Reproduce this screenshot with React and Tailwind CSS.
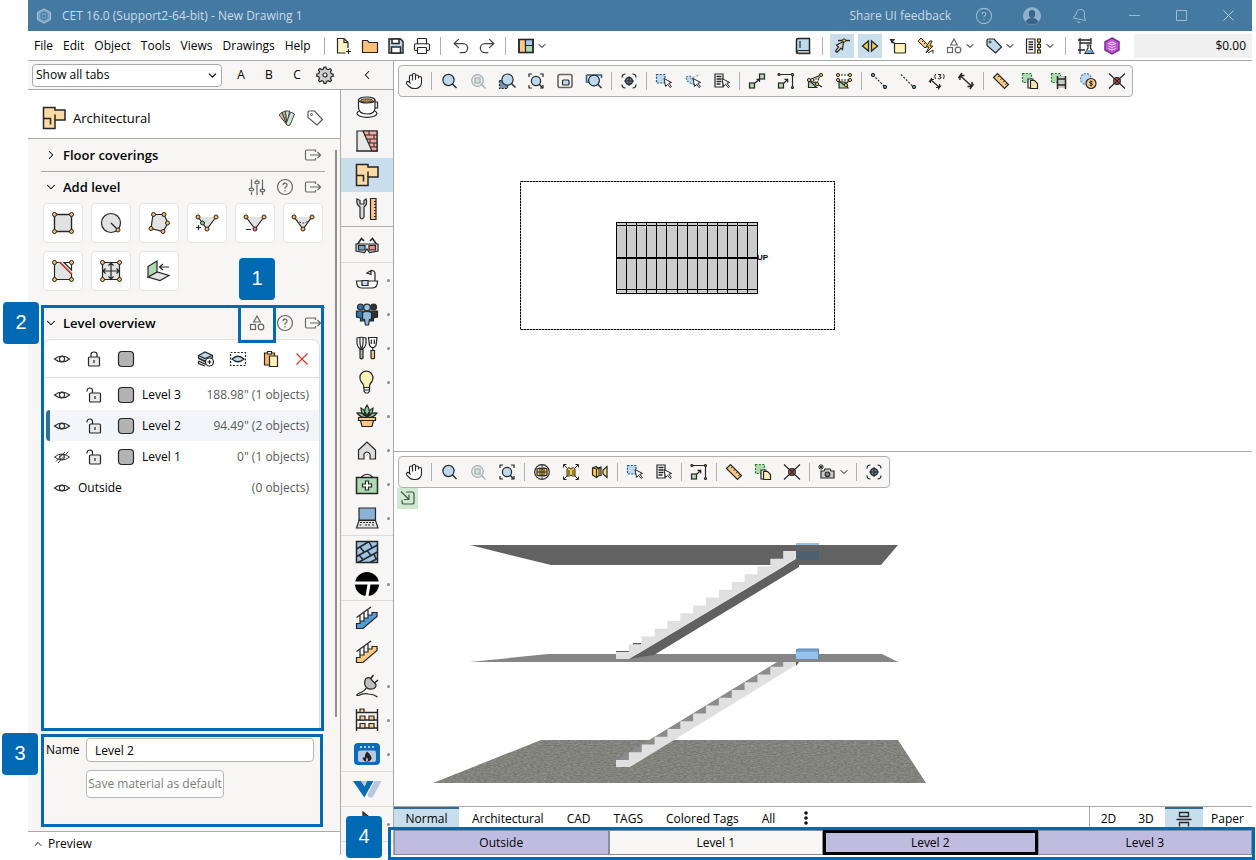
import React, { useState } from "react";
import { Hand, Undo2, Redo2, Printer, Bell, ChevronDown, ChevronRight, ChevronLeft, ChevronUp } from "lucide-react";

const INK = "#262626";
const BLUE = "#bdd9ee";
const GREEN = "#aed9b1";
const GOLD = "#f7cf45";
const ORANGE = "#fbc887";

const Glyph = ({ size = 20, children, className = "" }) => (
  <svg
    width={size}
    height={size}
    viewBox={`0 0 ${size} ${size}`}
    fill="none"
    stroke={INK}
    strokeWidth="1.2"
    className={`shrink-0 ${className}`}
    aria-hidden="true"
  >
    {children}
  </svg>
);

const Cursor = ({ x = 10, y = 7.5 }) => (
  <path d={`M${x} ${y}l1.6 8 2-2.2 2.6 3.2 1.2-1-2.6-3.2 2.8-.8z`} fill="#fff" strokeWidth="1" />
);

const Corners = () => <path d="M3 6V3h3M14 3h3v3M17 14v3h-3M6 17H3v-3" />;

const Node = ({ x, y, r = 2, fill = "#fbb95f" }) => <circle cx={x} cy={y} r={r} fill={fill} strokeWidth="1" />;

const Pin = ({ x, y }) => <circle cx={x} cy={y} r="1.6" fill={GOLD} strokeWidth="1" />;

const glyphs = {
  search: (
    <g>
      <circle cx="9.5" cy="9" r="5.6" fill={BLUE} />
      <path d="M13.5 13l4 4" strokeWidth="1.4" />
    </g>
  ),
  searchOff: (
    <g stroke="#a9adb1">
      <circle cx="9.5" cy="9.5" r="5.8" fill="#e8ebee" />
      <rect x="7" y="7" width="5" height="5" fill="#d2e3d1" />
      <path d="M13.5 13.5l4 4" />
    </g>
  ),
  searchArea: (
    <g>
      <rect x="2.5" y="9.5" width="8" height="8" fill="#6f93b0" strokeDasharray="2 1.3" />
      <circle cx="10.5" cy="8.6" r="5.6" fill={BLUE} />
      <path d="M14.5 12.6l4 4" strokeWidth="1.4" />
    </g>
  ),
  searchFit: (
    <g>
      <Corners />
      <circle cx="10" cy="10" r="4.6" fill={BLUE} />
      <path d="M13.4 13.4l3.5 3.5" strokeWidth="1.4" />
    </g>
  ),
  pip: (
    <g>
      <rect x="3" y="3.5" width="14" height="13" rx="2" stroke="#666" strokeWidth="1.6" />
      <rect x="7.5" y="9" width="6.5" height="5" rx="1" fill={BLUE} />
    </g>
  ),
  searchWindow: (
    <g>
      <path d="M2.5 4h15v3M2.5 4v7h3" strokeWidth="1.6" stroke="#2c5d84" />
      <circle cx="10" cy="9.5" r="5.4" fill={BLUE} />
      <path d="M14 13.6l3.5 3.5" strokeWidth="1.4" />
    </g>
  ),
  target: (
    <g>
      <path d="M3 6.5Q3 3 6.5 3M13.5 3Q17 3 17 6.5M17 13.5Q17 17 13.5 17M6.5 17Q3 17 3 13.5" />
      <circle cx="10" cy="10" r="3.4" fill="#6d8ba3" />
      <path d="M10 5v10M5 10h10" strokeWidth="1" />
    </g>
  ),
  selectBox: (
    <g>
      <rect x="2.5" y="3.5" width="8.5" height="8.5" fill={BLUE} strokeDasharray="2 1.3" stroke="#24577f" />
      <Cursor />
    </g>
  ),
  selectLasso: (
    <g>
      <path d="M3 6l4-1 4 4 2 5-4-1-5-3z" stroke="#4d7ea5" strokeDasharray="2 1.3" fill={BLUE} />
      <path d="M7 8l10-4.5" stroke="#7ca3c2" strokeDasharray="2 1.5" />
      <Cursor />
    </g>
  ),
  selectList: (
    <g>
      <path d="M3 3h8v13H3z" fill="#fff" />
      <path d="M4.5 5.5h5M4.5 8h5M4.5 10.5h5M4.5 13h4" strokeWidth="1.4" />
      <Cursor />
    </g>
  ),
  stretchA: (
    <g>
      <rect x="2.5" y="12" width="5" height="5" fill={GREEN} />
      <rect x="12.5" y="3" width="5" height="5" fill={GREEN} />
      <path d="M8 12l4-3.5M9.5 8.3h3V11" />
    </g>
  ),
  stretchB: (
    <g>
      <rect x="2.5" y="12" width="5" height="5" fill={GREEN} />
      <path d="M3 3.5h13.5v13M8 12l3.5-3.5M8.5 8.3h3.2v3.2" />
      <circle cx="3" cy="3.5" r="1" fill={GOLD} />
      <circle cx="16.5" cy="3.5" r="1" fill={GOLD} />
      <circle cx="16.5" cy="16.5" r="1" fill={GOLD} />
    </g>
  ),
  snapA: (
    <g>
      <path d="M3.5 9.5v7h8l-4-4z" fill={GREEN} />
      <path d="M4 9l12-5M4 9l8 4 5 3" />
      <path d="M8 9l6-2-2 5z" fill="#fff" strokeDasharray="1.5 1" />
      <Pin x={4} y={9} />
      <Pin x={16} y={4} />
      <Pin x={12} y={13} />
    </g>
  ),
  snapB: (
    <g>
      <path d="M5 11h6l3 6H5z" fill={GREEN} />
      <path d="M4 4h12M4 9h12" strokeDasharray="2 1" />
      <path d="M4 9l6 5 6-5" />
      <Pin x={4} y={4} />
      <Pin x={16} y={4} />
      <Pin x={4} y={9} />
      <Pin x={16} y={9} />
      <Pin x={12} y={14} />
    </g>
  ),
  lineNodes: (
    <g>
      <path d="M4 4l12 12" strokeDasharray="2 1.5" />
      <Node x={4} y={4} r={1.7} fill="#5b93bf" />
      <Node x={16} y={16} r={1.7} fill="#5b93bf" />
    </g>
  ),
  lineDots: (
    <g>
      <path d="M3 3.5l12 12" strokeDasharray="2 1.5" />
      <Node x={16} y={16} r={1.7} fill="#5b93bf" />
    </g>
  ),
  dimThree: (
    <g>
      <path d="M3.5 8.5l9 8M3.5 8.5V12M3.5 8.5H7M12.5 16.5V13M12.5 16.5H9M2 11l3-4M11 18.5l3-4" />
      <path d="M8.5 3Q7 5.500 8.500 8M16.500 3q1.500 2.500 0 5M11 3.500h3l-1.500 2q2 .2 1.500 1.500-1 1.500-3 .5" strokeWidth="1" />
    </g>
  ),
  dimension: (
    <path
      d="M4 4.500l12 11M4 4.500V9M4 4.500h4.500M16 15.500V11M16 15.500h-4.500M2.500 7l3.500-5M14 18l3.500-5"
      strokeWidth="1.4"
    />
  ),
  ruler: (
    <g>
      <path d="M2.5 6.5l4-4 11 11-4 4z" fill={ORANGE} />
      <path d="M8.5 4.8L7 6.3M11 7.3L9.5 8.8M13.5 9.8L12 11.3M16 12.3l-1.5 1.5" strokeWidth="1" />
    </g>
  ),
  sheets: (
    <g>
      <rect x="2.5" y="2.5" width="9" height="9" fill={GREEN} stroke="#2a7535" strokeDasharray="2 1.4" />
      <path d="M8 8h5v9H8z" fill="#fff" />
      <path d="M10.5 9.5h4l3 3v5h-7z" fill="#fbe9b7" />
    </g>
  ),
  sheetFilm: (
    <g>
      <rect x="2.5" y="2.5" width="9" height="9" fill={GREEN} stroke="#2a7535" strokeDasharray="2 1.4" />
      <path d="M8.5 5h8v12h-8z" fill="#c9c9c9" stroke="none" />
      <path d="M8.5 5v13M16.5 5v13M8.5 8h8M8.5 14h8" strokeWidth="1.5" />
    </g>
  ),
  coinSelect: (
    <g>
      <circle cx="8" cy="8" r="5.5" fill={BLUE} stroke="#4d7ea5" strokeDasharray="2 1.3" />
      <circle cx="13" cy="12.5" r="5" fill={ORANGE} />
      <path d="M14.5 10.8q-2.5-1.300-3 .3.200 1 1.500 1.200 1.800.4 1.500 1.500-.8 1.200-3 .2M13 9.500v6" strokeWidth="1" />
    </g>
  ),
  cross: (
    <g>
      <path d="M2 2.5l16 15M18 2.5l-16 15" />
      <circle cx="10" cy="10" r="3.3" fill="#d9624d" />
      <path d="M8 8l4 4M12 8l-4 4" />
    </g>
  ),
  globe: (
    <g>
      <circle cx="10" cy="10" r="7.3" fill="#fff" />
      <path d="M5 7l3-1 2 1 2-1 3 1v6l-3 1-2-1-2 1-3-1z" fill={GOLD} />
      <path d="M5 10h10M8 6v8M12 6v8M10 3v14" strokeWidth="1" />
    </g>
  ),
  boxExtents: (
    <g>
      <path d="M3 3l3 3M17 3l-3 3M3 17l3-3M17 17l-3-3M2.5 5.5v-3h3M14.5 2.5h3v3M2.5 14.5v3h3M14.5 17.5h3v-3" strokeWidth="1" />
      <path d="M6 7l2-1.5L10 7l2-1.5L14 7v7h-2.5L10 13l-1.5 1H6z" fill={GOLD} strokeWidth="1" />
      <path d="M8 8v5M12 8v5" strokeWidth="1" />
    </g>
  ),
  boxCamera: (
    <g>
      <path d="M2.5 6L6 4.5 8 6l3-1v8.5H9l-2.5 2-4-2.5z" fill={GOLD} />
      <path d="M6.5 7v8M9 6v7M2.5 6l4 1L11 6" strokeWidth="1" />
      <path d="M13 8l4-3.5v11L13 12z" fill="#f3dd8f" />
    </g>
  ),
  camera: (
    <g>
      <path d="M5 9h3l1-2h5l1 2h3v7H5z" fill="#ccc" />
      <circle cx="11.5" cy="12.3" r="2.3" fill="#8a8a8a" />
      <path d="M5 2v6M2 5h6M3 3l4 4M7 3L3 7" strokeWidth="1" />
    </g>
  ),
  newFile: (
    <g>
      <path d="M11.5 17h-8V2.5H10l4 4V12" fill="#fff4c4" />
      <path d="M10 2.5v4h4M14.5 13v5M12 15.5h5" />
    </g>
  ),
  folder: <path d="M2.5 4.5h5l1.500 2h8.500v10h-15z" fill="#fbc174" />,
  save: (
    <g strokeWidth="1.5">
      <path d="M3 3h11.5L17 5.5V17H3z" fill={BLUE} />
      <path d="M6 3h7v4.5H6zM5.5 11h9v6h-9z" fill="#fff" />
    </g>
  ),
  layout: (
    <g>
      <rect x="3" y="3.5" width="14" height="13" fill={GREEN} />
      <path d="M3 3.5h6.5v13H3z" fill={ORANGE} />
      <path d="M9.5 3.5H17v6H9.5z" fill="#a9cbea" />
      <rect x="3" y="3.5" width="14" height="13" strokeWidth="1.5" />
    </g>
  ),
  book: (
    <g>
      <path d="M5.5 2.5h11v15h-11q-2 0-2-1.500V4q0-1.500 2-1.500z" fill={BLUE} strokeWidth="1.5" />
      <path d="M4 16q0-1.300 1.500-1.300h11v2.500h-11Q4 17.200 4 16z" fill="#fff" />
      <path d="M7 5v7" />
    </g>
  ),
  snapCursor: (
    <g>
      <path d="M6 4.5h12" strokeWidth="1.4" />
      <path d="M4.5 9l7-3.5-1 8L9 12l-4 4.500L3.500 15l3-4z" fill="#d5d5d5" />
      <Pin x={12} y={4.5} />
    </g>
  ),
  arrows: (
    <g strokeWidth="1.3">
      <path d="M8.5 5v10l-6-5z" fill={GOLD} />
      <path d="M11.5 5v10l6-5z" fill={GOLD} />
    </g>
  ),
  noteBox: (
    <g>
      <rect x="6.5" y="7.5" width="11" height="9.5" rx="1" fill="#fff2b8" />
      <path d="M7 8L3 4M2.5 3.5H6l-2 3z" />
    </g>
  ),
  flashRuler: (
    <g strokeWidth="1">
      <path d="M2 5l3-3 7 7-3 3z" fill={ORANGE} />
      <path d="M6 6l1.500-1.500M8 8l1.500-1.500" />
      <path d="M14 5l-4 6h3l-3 6 7-7h-3l2-5z" fill={GOLD} />
      <path d="M12 17l5-3v3.500" />
    </g>
  ),
  shapes: (
    <g stroke="#666">
      <path d="M10 3l3.300 6H6.700z" />
      <rect x="3.5" y="11.5" width="5" height="5" />
      <circle cx="14" cy="14" r="2.8" />
    </g>
  ),
  tagBlue: (
    <g>
      <path d="M3 4.5Q3 3 4.5 3H10l7.5 8-6 6L3 9.5z" fill={BLUE} />
      <circle cx="6" cy="6" r="1" fill="#fff" strokeWidth="1" />
    </g>
  ),
  tag: (
    <g stroke="#555">
      <path d="M3 4.5Q3 3 4.5 3h5l8 8.5-5.500 5.500L3 9.500z" fill="#fff" />
      <circle cx="6.5" cy="6.5" r="1" strokeWidth="1" />
    </g>
  ),
  listTree: (
    <g>
      <path d="M2.5 3H11v14H2.5z" />
      <path d="M4.5 6H9M4.5 8.500H9M4.500 11H9M4.500 13.500H9M15 4v12" strokeWidth="1.4" />
      <rect x="13.5" y="3" width="3" height="3" fill={GOLD} strokeWidth="1" />
      <rect x="13.5" y="8.5" width="3" height="3" fill={GOLD} strokeWidth="1" />
      <rect x="13.5" y="14" width="3" height="3" fill={GOLD} strokeWidth="1" />
    </g>
  ),
  labRoom: (
    <g>
      <path d="M4 2v16M2 4h13M2 14h7M15 2v6M4 7h11" strokeWidth="1.3" />
      <path d="M10.5 9h5M12 9v3l-3 5.500h8.500L14.500 12V9" fill="#fff" />
      <path d="M11 14h4.500l1.500 3H9.500z" fill="#6fa8d6" stroke="none" />
    </g>
  ),
  hexPurple: (
    <g stroke="#7a2b95">
      <path d="M10 2l7 4v8l-7 4-7-4V6z" fill="#c25bd0" strokeWidth="1.5" />
      <path d="M6.5 7.5L10 6l3.500 1.500L10 9zM6.500 10l3.500 1.500 3.500-1.500M6.500 12.500L10 14l3.500-1.500" stroke="#f0d6f5" strokeWidth="1" />
    </g>
  ),
  gear: (
    <g>
      <path
        d="M9 2h2l.5 2 1.800.7 1.800-1 1.400 1.400-1 1.800.7 1.800 2 .5v2l-2 .5-.7 1.800 1 1.800-1.400 1.400-1.800-1-1.800.7-.5 2H9l-.5-2-1.800-.7-1.800 1-1.400-1.400 1-1.800-.7-1.800-2-.5V9l2-.5.7-1.800-1-1.800 1.400-1.400 1.800 1L8.500 4z"
        fill="#cfcfcf"
      />
      <circle cx="10" cy="10" r="2" fill="#fff" />
    </g>
  ),
  palette: (
    <g strokeWidth="1" stroke="#444">
      <path d="M10 17L2 7l3-2.500z" fill="#e8b59a" />
      <path d="M10 17L5 4.500 8.500 3z" fill="#a9b58c" />
      <path d="M10 17L8.500 3h4z" fill="#d9e8da" />
      <path d="M9 16l4.500-12 4 2-4.500 11q-2 1.500-4-1z" fill="#cfe8d2" />
    </g>
  ),
  exit: (
    <g stroke="#666">
      <path d="M12.5 7V5H4Q2.5 5 2.5 6.500v7Q2.500 15 4 15h8.500v-2" />
      <path d="M7 10h10.500M14.500 7l3 3-3 3" />
    </g>
  ),
  sliders: (
    <g stroke="#666">
      <path d="M4.5 2.500v10M4.500 15v3M10 2.500V5M10 8v10M15.500 2.500v10M15.500 15v3" />
      <ellipse cx="4.5" cy="12.5" rx="2.2" ry="1.3" fill="#fff" />
      <ellipse cx="10" cy="5.5" rx="2.2" ry="1.3" fill="#fff" />
      <ellipse cx="15.5" cy="13.5" rx="2.2" ry="1.3" fill="#fff" />
    </g>
  ),
  help: (
    <g stroke="#666">
      <circle cx="10" cy="10" r="7.5" />
      <path d="M8 8.300q0-2.100 2-2.100t2 2q0 1.200-2 2.400v1.200M10 13.200v1.200" />
    </g>
  ),
  eye: (
    <g stroke="#333">
      <path d="M2.5 10Q10 4 17.500 10 10 16 2.500 10z" />
      <circle cx="10" cy="10" r="2.6" />
    </g>
  ),
  eyeOff: (
    <g stroke="#333" strokeWidth="1">
      <path d="M2.5 10Q10 4 17.500 10 10 16 2.500 10zM6 16L16.500 4.500M4 14.500L13 5" />
      <circle cx="10" cy="10" r="2.5" />
    </g>
  ),
  lock: (
    <g>
      <rect x="4.5" y="8" width="11" height="9" rx="1" fill="#e9e9e9" />
      <path d="M7 8V5.500Q7 3 10 3t3 2.500V8M10 11v3" />
    </g>
  ),
  unlock: (
    <g>
      <rect x="5.5" y="8" width="11" height="9" rx="1" fill="#e9e9e9" />
      <path d="M8.500 8V5.500Q8.500 3 6 3T3 5.500v1M11 11v3" />
    </g>
  ),
  swatch: <rect x="2.5" y="2.5" width="15" height="15" rx="3.5" fill="#b3b3b3" />,
  layersAdd: (
    <g>
      <path d="M2.5 12L9 15l7-3M2.500 9.500L9 12.500l7-3M2.500 12v2.500L9 17" fill="#e3edf6" />
      <path d="M2.500 6.500L9 3l7.500 3.500V9L9 12 2.500 9z" fill={BLUE} />
      <path d="M2.500 6.500L9 9.500l7-3" />
      <circle cx="13.5" cy="13" r="4" fill="#fff" />
      <path d="M13.500 11v4M11.500 13h4" />
    </g>
  ),
  layerView: (
    <g>
      <rect x="2.5" y="3.5" width="15" height="13" strokeDasharray="2 1.5" />
      <path d="M4 10Q10 4.500 16 10 10 15.500 4 10z" fill={BLUE} />
    </g>
  ),
  paste: (
    <g>
      <path d="M4.500 4h10v12h-10z" fill="#fbb95f" />
      <path d="M7.500 2.500h4V5h-4z" fill="#fff" />
      <path d="M9.500 7h8v10.500h-8z" fill="#fff2b8" />
    </g>
  ),
  remove: <path d="M4.500 4.500l11 11M15.500 4.500l-11 11" stroke="#d63b25" />,
  splitView: (
    <g strokeWidth="1.3">
      <path d="M2.500 10.500h15M5.500 7.500V3.500h9v4zM5.500 17.500v-4h9v4" />
    </g>
  ),
  corner: (
    <g stroke="#3c5c44">
      <path d="M8 4h6q2 0 2 2v8q0 2-2 2H6q-2 0-2-2v-2M3 3.500l8 8M11 6.500v5H6" />
    </g>
  ),
  // shapes used by the "Add level" tools
  sq: (
    <g>
      <path d="M5.500 5.500h17v17h-17z" fill="#e2e2e2" strokeWidth="1.4" />
      <Node x={5.5} y={5.5} />
      <Node x={22.5} y={5.5} />
      <Node x={5.5} y={22.5} />
      <Node x={22.5} y={22.5} />
    </g>
  ),
  circ: (
    <g>
      <circle cx="14" cy="14" r="9.5" fill="#e2e2e2" />
      <path d="M14 14l6.500 6.500" />
      <Node x={21} y={21} />
    </g>
  ),
  poly: (
    <g>
      <path d="M8 5.500h11l4 8.500-5 8.500-12-3z" fill="#e2e2e2" />
      <Node x={8.5} y={5.5} />
      <Node x={19} y={5.5} />
      <Node x={22.5} y={14} />
      <Node x={18} y={22.5} />
      <Node x={6} y={19.5} />
    </g>
  ),
  addPt: (
    <g>
      <path d="M5 8h18l-9 12z" fill="#e2e2e2" stroke="none" />
      <path d="M5 8l9 12 9-12M3 18.500h5M5.500 16v5" />
      <Node x={5} y={8} />
      <Node x={23} y={8} />
      <Node x={9.5} y={14} fill="#7cc08a" />
      <Node x={14} y={20} />
    </g>
  ),
  delPt: (
    <g>
      <path d="M5 8h18l-9 12z" fill="#e2e2e2" stroke="none" />
      <path d="M5 8l9 12 9-12M5 20.500h5" />
      <Node x={5} y={8} />
      <Node x={23} y={8} />
      <Node x={14} y={20} fill="#ef7f73" />
    </g>
  ),
  curvePt: (
    <g>
      <path d="M5 8h18l-9 12z" fill="#e2e2e2" stroke="none" />
      <path d="M5 8l9 12 9-12" />
      <path d="M5 8q9 12 18 0" strokeDasharray="2 1.5" strokeWidth="1" />
      <Node x={5} y={8} />
      <Node x={23} y={8} />
      <Node x={14} y={20} />
    </g>
  ),
  cut: (
    <g>
      <path d="M5.500 5.500H11L22.500 17v5.500h-17z" fill="#e2e2e2" />
      <path d="M15 5.500h7.500V13z" fill="#fff" />
      <path d="M11 5l12 12" stroke="#e03a2b" strokeWidth="1.5" />
      <Node x={5.5} y={5.5} />
      <Node x={22.5} y={5.5} />
      <Node x={5.5} y={22.5} />
      <Node x={22.5} y={22.5} />
    </g>
  ),
  move: (
    <g>
      <path d="M5.500 5.500h17v17h-17z" fill="#e2e2e2" />
      <path d="M14 6v16M6 14h16M11.500 8.500L14 6l2.500 2.500M11.500 19.500L14 22l2.500-2.500M8.500 11.500L6 14l2.500 2.500M19.500 11.500L22 14l-2.500 2.500" />
      <Node x={5.5} y={5.5} />
      <Node x={22.5} y={5.5} />
      <Node x={5.5} y={22.5} />
      <Node x={22.5} y={22.5} />
    </g>
  ),
  wallIn: (
    <g>
      <path d="M3 20l9-5 12 3.500-9 5z" fill="#e2e2e2" />
      <path d="M3 9.500L12 4v11l-9 5z" fill={GREEN} />
      <path d="M24 10h-9M18 7l-3.500 3 3.500 3" />
    </g>
  ),
  // application strip
  coffee: (
    <g>
      <ellipse cx="12" cy="18.5" rx="10" ry="3.8" fill="#fff" />
      <path d="M18 7h4.500v6H18" fill="#fff" />
      <path d="M3.500 5v7q0 7 8.500 7t8-7V5z" fill="#fff" />
      <ellipse cx="11.7" cy="5" rx="8.2" ry="3" fill="#fff" />
      <ellipse cx="11.7" cy="5.5" rx="6" ry="1.6" fill="#c99046" strokeWidth="1" />
    </g>
  ),
  wall: (
    <g>
      <path d="M2 2h20v20H2z" fill="#e8e8e8" />
      <path d="M8 2h14v20h-5z" fill="#f3a9a0" />
      <path d="M9.500 6H22M11 10h11M13 14h9M15 18h7M14 2v4M19 6v4M15 10v4M19 14v4M1 22h22" strokeWidth="1" />
    </g>
  ),
  arch: (
    <g strokeWidth="1.5">
      <path d="M1.500 1.500H13V4h10v10H13v8.500H1.500z" fill="#fdd9a4" />
      <path d="M1.500 12.500h7v6M13 8.500V14" />
    </g>
  ),
  tools: (
    <g>
      <path d="M2 2q-1 5 3 8v10q1.500 4 4 0V10q4-3 2-8L9 3.500V7H5V3.500z" fill="#ddd" />
      <path d="M15.500 1.500H21v21h-5.500z" fill={ORANGE} />
      <path d="M21 4.500h-2M21 7.500h-2M21 10.500h-2M21 13.500h-2M21 16.500h-2M21 19.500h-2" strokeWidth="1" />
    </g>
  ),
  glasses: (
    <g>
      <path d="M2 12l4.500-6.500L9 8M22 12l-4.500-6.500L15 8" strokeWidth="1.5" />
      <path d="M1 11h22v7l-8.500 1.500L12 16l-2.500 3.500L1 18z" fill="#dedede" />
      <path d="M3.500 12.500H10V17H3.500z" fill="#6fa8d6" />
      <path d="M14 12.500h6.500V17H14z" fill="#f08a80" />
    </g>
  ),
  bath: (
    <g>
      <path d="M1.500 13h21q0 7-5 7h-11q-5 0-5-7z" fill="#fff" />
      <path d="M7 12.500h6v5H7z" fill={BLUE} />
      <path d="M20 13V5q-1-3.500-5-2M12 5l4-2.500v4z" />
    </g>
  ),
  people: (
    <g>
      <circle cx="5.5" cy="5" r="3" fill="#2f77b5" />
      <circle cx="18.5" cy="5" r="3" fill="#333" />
      <path d="M1.500 9h8v10h-4v-3l-4-1z" fill="#2f77b5" />
      <path d="M22.500 9h-8v10h4v-3l4-1z" fill="#333" />
      <circle cx="12" cy="5.5" r="3.3" fill="#9cc3e3" />
      <path d="M7.500 10.500q4.500-2 9 0V17l-2 .5-1 5.500h-3l-1-5.500-2-.5z" fill="#8fb9db" />
    </g>
  ),
  whisk: (
    <g>
      <path d="M2 2q4.500-1.500 9 0v5q-.5 5-4.500 6.500Q2.500 12 2 7z" fill="#fff" />
      <path d="M5 2q-.5 7 1.500 11Q8.500 9 8 2" />
      <path d="M5 13.500h3V22q-1.500 1.500-3 0z" fill="#b5b5b5" />
      <path d="M13.500 1.500H22l-1 8-2 2h-2.500l-2-2zM16.300 3.500V8M19.300 3.500V8" fill="#fff" />
      <path d="M17.800 11.500v3" />
      <path d="M16 14.500h3.500V22q-1.700 1.500-3.500 0z" fill={ORANGE} />
    </g>
  ),
  bulb: (
    <g>
      <path d="M9 17.500q0-3-3-6Q3 5.500 8 2q4-2 7.500.5 4 4 1.500 9-3 3-2.500 6z" fill="#fff2b8" />
      <path d="M9 17.500h5.500V21L13 23h-2.500L9 21zM9 20h5.500" fill="#fff" />
    </g>
  ),
  plant: (
    <g>
      <path d="M12 13Q7 8 12 1q5 7 0 12zM12 13Q6 11 6 4q5 3 6 9zM12 13q6-2 6-9-5 3-6 9zM12 13Q7 15 2 9q6-1 10 4zM12 13q5 2 10-4-6-1-10 4z" fill="#8ccf9c" />
      <path d="M3.500 13.500h17v3h-17zM5.500 16.500h13l-1.500 6H7z" fill={ORANGE} />
    </g>
  ),
  house: <path d="M3.500 12L12 4l8.500 8v9h-5.500v-5q-3-4-6 0v5H3.500z" fill="#dcdcdc" />,
  medkit: (
    <g>
      <path d="M6 5.500Q12-1 18 5.500" />
      <path d="M1.500 5.500h21v16h-21z" fill={GREEN} strokeWidth="1.5" />
      <path d="M10.500 9h3v3h3v3h-3v3h-3v-3h-3v-3h3z" fill="#fff" />
    </g>
  ),
  laptop: (
    <g>
      <path d="M4 2h16.500v12H4z" fill="#8ab2d4" />
      <path d="M4 14.500h16.500L23 22H1.500z" fill="#e3e3e3" />
      <path d="M5 16.500h14M4.500 19h3M10 19h5M17 19h3" strokeDasharray="2 1" />
    </g>
  ),
  brick: (
    <g strokeWidth="1.5">
      <path d="M1.500 1.500h21v21h-21z" fill="#9cc5e5" />
      <path d="M1.500 9L14 1.500M1.500 16.500L22.500 5M3 22.500L22.500 12M15 22.500l7.500-4M5 7l4 5M14 2l3 5.500M4 15l4 4.500M12 10.500l4 5M19 14l2 5" />
    </g>
  ),
  tee: (
    <g stroke="none">
      <circle cx="12" cy="12" r="12" fill="#000" />
      <path d="M0 9.500h24v3h-8.500L13.500 24h-3l2-11.500H0z" fill="#fff" />
    </g>
  ),
  stairBlue: (
    <g>
      <path d="M1.500 17.500H5V15h4v-3h4V9h4V6.500h5v4L8 22.500H1.500z" fill="#539bd0" />
      <path d="M1.500 11.500L16 1M5 9.500V15M9 6.500V12M13 4v5" />
    </g>
  ),
  stairOrange: (
    <g>
      <path d="M1.500 17.500H5V15h4v-3h4V9h4V6.500h5v4L8 22.500H1.500z" fill={ORANGE} />
      <path d="M1.500 11.500L16 1M5 9.500V15M9 6.500V12M13 4v5" />
    </g>
  ),
  plug: (
    <g>
      <path d="M15 5.500L18.500 1M19 9.500L23 6" strokeWidth="1.5" />
      <path d="M10.500 5Q13 3 15 4l6 6.500q.5 2-2 4-4 1.500-7-.5-4-4-1.500-9z" fill="#bfbfbf" />
      <path d="M11.500 13.500Q10 17 4.500 19q-5 2.500-1 2.500 5-2.500 10-1.500 5 0 9 3" />
    </g>
  ),
  shelf: (
    <g>
      <path d="M1.500 1v22M22.500 1v22M1.500 4.500h21M1.500 12h21M1.500 20h21" strokeWidth="1.4" />
      <path d="M5 8h5v4H5zM14 8h5v4h-5zM5 15.500h5V20H5zM14 15.500h5V20h-5zM5 1h4v3.500H5z" fill={ORANGE} />
    </g>
  ),
  stove: (
    <g stroke="none">
      <rect x="-1" y="1" width="26" height="22" rx="4" fill="#0b6bb5" />
      <path d="M5 4h2v2H5zM9 4h2v2H9zM13 4h2v2h-2zM17 4h2v2h-2z" fill="#a9cbea" />
      <rect x="3" y="8.5" width="18" height="11.5" rx="2" fill="#b9c7e0" />
      <path d="M12 9.500q5 4 4.500 7.500-2 3-4.500 3-5-1-4-5l1.500 1q0-4 2.500-6.500z" fill="#222" />
      <path d="M12 15.500q2 2.500 0 4.500-2-2 0-4.500z" fill="#b9c7e0" />
    </g>
  ),
  vee: (
    <g stroke="none">
      <path d="M-2 4h8l3.500 5.500L12 4h6.500L9.300 20.500z" fill="#0b6bb5" />
      <path d="M6 4h6L9.500 9.500zM19.500 4h7l-9 16.500H14l-1.500-3z" fill="#b9c7e0" />
    </g>
  ),
  cone: <path d="M8 0l6 5H8z" fill="#555" />,
};

const Sym = ({ name, size, className }) => (
  <Glyph size={size} className={className}>
    {glyphs[name]}
  </Glyph>
);

const IconButton = ({ name, label, size, className = "" }) => (
  <button type="button" aria-label={label || name} className={`flex shrink-0 items-center justify-center ${className}`}>
    <Sym name={name} size={size} />
  </button>
);

const Callout = ({ children, className }) => (
  <span
    className={`absolute z-10 flex h-[42px] w-9 items-center justify-center rounded bg-[#0069b4] pb-0.5 font-['Liberation_Sans',sans-serif] text-xl text-white ${className}`}
  >
    {children}
  </span>
);

const TitleBar = () => (
  <header className="flex h-[31px] shrink-0 items-center bg-[#4479a2] text-[#cbdbe7]">
    <Glyph size={16} className="mr-2.5 ml-2">
      <path d="M8 1l6.500 3.500v7L8 15l-6.500-3.500v-7z" fill="#7ea5c4" stroke="#9dbbd2" />
      <path d="M5 6l3-2 3 2v4l-3 2-3-2z" stroke="#4479a2" />
      <circle cx="8" cy="8" r="1.5" fill="#4479a2" stroke="none" />
    </Glyph>
    <h1 className="flex-1">CET 16.0 (Support2-64-bit) - New Drawing 1</h1>
    <a href="#feedback">Share UI feedback</a>
    <button type="button" aria-label="Help" className="ml-6">
      <svg width="18" height="18" viewBox="0 0 20 20" fill="none" stroke="#9dbbd2" strokeWidth="1.2">
        <circle cx="10" cy="10" r="8.5" />
        <path d="M8 8q0-2.200 2-2.200T12 8q0 1.200-2 2.400v1.300M10 13.200v1.300" />
      </svg>
    </button>
    <button type="button" aria-label="Account" className="ml-[30px]">
      <svg width="18" height="18" viewBox="0 0 18 18">
        <circle cx="9" cy="9" r="9" fill="#8fb1cb" />
        <ellipse cx="9" cy="7" rx="3.2" ry="4" fill="#3a658a" />
        <path d="M2.500 15q1-3 5-4h3q4 1 5 4-6.500 5-13 0z" fill="#3a658a" />
      </svg>
    </button>
    <button type="button" aria-label="Notifications" className="ml-[31px]">
      <Bell size={16} strokeWidth={1.5} color="#9dbbd2" className="rotate-12" />
    </button>
    <div className="mr-[18px] ml-[41px] flex gap-9">
      <button type="button" aria-label="Minimize">
        <svg width="11" height="11" stroke="#9dbbd2"><path d="M0 5.500h11" /></svg>
      </button>
      <button type="button" aria-label="Maximize">
        <svg width="11" height="11" stroke="#9dbbd2" fill="none"><path d="M.5.500h10v10H.5z" /></svg>
      </button>
      <button type="button" aria-label="Close">
        <svg width="11" height="11" stroke="#b4cbdc"><path d="M.5.500l10 10M10.500.500l-10 10" /></svg>
      </button>
    </div>
  </header>
);

const Rule = ({ className = "" }) => <span className={`h-[18px] w-px shrink-0 bg-[#b0b0b0] ${className}`} />;

const menus = ["File", "Edit", "Object", "Tools", "Views", "Drawings", "Help"];

const MenuBar = () => (
  <nav className="flex h-[30px] shrink-0 items-center border-b border-[#a9a9a9] pl-1.5">
    <div className="flex gap-2.5">
      {menus.map((menu) => (
        <button type="button" key={menu}>{menu}</button>
      ))}
    </div>
    <Rule className="ml-[13px]" />
    <div className="ml-[9px] flex gap-1.5">
      <IconButton name="newFile" label="New" />
      <IconButton name="folder" label="Open" />
      <IconButton name="save" label="Save" />
      <button type="button" aria-label="Print" className="flex size-5 items-center justify-center">
        <Printer size={18} strokeWidth={1.6} color={INK} />
      </button>
    </div>
    <Rule className="ml-2" />
    <div className="ml-2.5 flex gap-1.5">
      <button type="button" aria-label="Undo" className="flex size-5 items-center justify-center">
        <Undo2 size={20} strokeWidth={1.5} color="#444" />
      </button>
      <button type="button" aria-label="Redo" className="flex size-5 items-center justify-center">
        <Redo2 size={20} strokeWidth={1.5} color="#444" />
      </button>
    </div>
    <Rule className="ml-2" />
    <button type="button" aria-label="Window layout" className="ml-2.5 flex items-center">
      <Sym name="layout" />
      <ChevronDown size={12} strokeWidth={2} />
    </button>
    <div className="ml-auto flex h-full items-center">
      <IconButton name="book" label="Library" />
      <Rule className="mr-[7px] ml-[9px]" />
      <IconButton name="snapCursor" label="Snap" className="size-6 bg-[#c9deed]" />
      <IconButton name="arrows" label="Mirror" className="ml-1 size-6 bg-[#c9deed]" />
      <IconButton name="noteBox" label="Note" className="ml-1.5" />
      <IconButton name="flashRuler" label="Quick measure" className="ml-2" />
      {["shapes", "tagBlue", "listTree"].map((name) => (
        <button type="button" key={name} aria-label={name} className="ml-2 flex items-center">
          <Sym name={name} />
          <ChevronDown size={12} strokeWidth={2} />
        </button>
      ))}
      <Rule className="mr-2.5 ml-[9px]" />
      <IconButton name="labRoom" label="Lab" />
      <IconButton name="hexPurple" label="Extensions" className="ml-1.5" />
      <output className="ml-3 flex h-6 w-[118px] items-center justify-end bg-[#f0f0f0] pr-1.5">$0.00</output>
    </div>
  </nav>
);

const TabPicker = () => (
  <div className="flex h-[29px] shrink-0 items-center border-b border-[#a9a9a9] bg-[#f7f6f5] pl-1">
    <div className="relative">
      <select
        aria-label="Tabs"
        className="h-[23px] w-[190px] appearance-none rounded-sm border border-[#a9a9a9] bg-white pl-[3px]"
      >
        <option>Show all tabs</option>
      </select>
      <ChevronDown size={13} strokeWidth={2} className="pointer-events-none absolute top-[5px] right-[3px]" />
    </div>
    <button type="button" className="ml-[5px] w-7">A</button>
    <button type="button" className="w-7">B</button>
    <button type="button" className="w-7">C</button>
    <IconButton name="gear" label="Settings" className="ml-1" />
    <button type="button" aria-label="Collapse" className="ml-[25px]">
      <ChevronLeft size={14} strokeWidth={1.8} />
    </button>
  </div>
);

const SectionTitle = ({ title, open, children }) => (
  <div className="flex h-[31px] items-center pb-0.5">
    <button type="button" aria-expanded={open} className="flex flex-1 items-center gap-[5px] pl-[3px] text-[13px] font-semibold">
      {open ? <ChevronDown size={14} strokeWidth={1.8} /> : <ChevronRight size={14} strokeWidth={1.8} />}
      {title}
    </button>
    <div className="flex gap-2 pr-0.5">{children}</div>
  </div>
);

const levelTools = ["sq", "circ", "poly", "addPt", "delPt", "curvePt", "cut", "move", "wallIn"];

const levels = [
  { name: "Level 3", info: '188.98" (1 objects)', visible: true, material: true },
  { name: "Level 2", info: '94.49" (2 objects)', visible: true, material: true },
  { name: "Level 1", info: '0" (1 objects)', visible: false, material: true },
  { name: "Outside", info: "(0 objects)", visible: true, material: false },
];

const LevelTable = ({ selected, onSelect }) => (
  <div className="mr-[5px] ml-0.5 flex-1 rounded-t-lg border border-[#dedede] bg-white">
    <div className="flex h-[38px] items-center border-b border-[#dedede] pr-px">
      <IconButton name="eye" className="w-9" />
      <IconButton name="lock" className="w-7" />
      <IconButton name="swatch" className="w-9" />
      <IconButton name="layersAdd" label="Add level" className="ml-auto w-8" />
      <IconButton name="layerView" label="Isolate level" className="w-8" />
      <IconButton name="paste" label="Paste" className="w-8" />
      <IconButton name="remove" label="Delete level" className="w-8" />
    </div>
    <table className="mt-px w-full">
      <tbody>
        {levels.map((level) => {
          const active = level.name === selected;
          return (
            <tr key={level.name} onClick={() => onSelect(level.name)} className={active ? "h-[31px] bg-[#f2f6fb]" : "h-[31px]"}>
              <td className="relative w-[34px] pl-2">
                {active && <span className="absolute inset-y-0 left-0.5 w-1 rounded-l bg-[#2f6c9c]" />}
                <IconButton name={level.visible ? "eye" : "eyeOff"} label={`Show ${level.name}`} />
              </td>
              {level.material && (
                <>
                  <td className="w-8 pl-1.5"><IconButton name="unlock" label={`Lock ${level.name}`} /></td>
                  <td className="w-8 pl-1.5"><IconButton name="swatch" label={`Material of ${level.name}`} /></td>
                </>
              )}
              <td colSpan={level.material ? 1 : 3}>{level.name}</td>
              <td className="pr-2.5 text-right text-[#5a5a5a]">{level.info}</td>
            </tr>
          );
        })}
      </tbody>
    </table>
  </div>
);

const SidePanel = ({ selected, onSelect }) => (
  <aside className="flex min-w-0 flex-1 flex-col border-r border-[#a9a9a9]">
    <div className="flex h-12 shrink-0 items-center pt-2 pr-[15px] pl-[14px]">
      <Sym name="arch" size={24} />
      <h2 className="ml-[7px] flex-1 text-[13px]">Architectural</h2>
      <IconButton name="palette" label="Finishes" />
      <IconButton name="tag" label="Tags" className="ml-2" />
    </div>
    <div className="flex min-h-0 flex-1 border-t border-[#a9a9a9] bg-[#f7f6f5]">
      <div className="mr-2.5 flex min-w-0 flex-1 flex-col pl-[13px]">
        <section className="h-8 pt-px">
          <SectionTitle title="Floor coverings">
            <IconButton name="exit" label="Pop out" />
          </SectionTitle>
        </section>
        <section className="border-t border-[#a9a9a9] pb-4">
          <SectionTitle title="Add level" open>
            <IconButton name="sliders" label="Adjust" />
            <IconButton name="help" label="Help" />
            <IconButton name="exit" label="Pop out" />
          </SectionTitle>
          <div className="flex flex-wrap gap-2 pl-0.5">
            {levelTools.map((name) => (
              <IconButton key={name} name={name} size={28} className="size-10 rounded border border-[#e3e3e3] bg-white" />
            ))}
          </div>
        </section>
        <section className="relative flex flex-1 flex-col border-t border-[#a9a9a9] pb-0.5">
          <SectionTitle title="Level overview" open>
            <div className="relative flex">
              <IconButton name="shapes" label="Level symbols" />
              <span className="pointer-events-none absolute -top-2 -left-[9px] h-[38px] w-[38px] border-3 border-[#0069b4]" />
              <Callout className="-top-[55px] -left-2">1</Callout>
            </div>
            <IconButton name="help" label="Help" />
            <IconButton name="exit" label="Pop out" />
          </SectionTitle>
          <LevelTable selected={selected} onSelect={onSelect} />
          <span className="pointer-events-none absolute -top-[3px] right-px bottom-0 left-0 border-3 border-[#0069b4]" />
          <Callout className="-top-1.5 -left-[38px]">2</Callout>
        </section>
        <section className="relative mt-[3px] mr-0.5 mb-1 h-[93px] border-3 border-[#0069b4] pt-px pl-0.5">
          <div className="flex items-center">
            <label htmlFor="level-name" className="w-10">Name</label>
            <input
              id="level-name"
              value={selected}
              onChange={(e) => onSelect(e.target.value)}
              className="mr-1.5 h-6 min-w-0 flex-1 rounded border border-[#b5b5b5] bg-white pl-2"
            />
          </div>
          <button type="button" className="mt-2 ml-10 h-7 w-[138px] rounded border border-[#b5b5b5] bg-white text-[#7d7d7d]">
            Save material as default
          </button>
          <Callout className="-top-1 -left-[42px]">3</Callout>
        </section>
      </div>
      <span className="mt-[11px] mr-[3px] h-[82%] w-0.5 bg-[#8f8f8f]" />
    </div>
    <button type="button" className="flex h-6 shrink-0 items-center gap-1 border-t border-[#a9a9a9] pl-1">
      <ChevronUp size={12} strokeWidth={1.8} />
      Preview
    </button>
  </aside>
);

const stripGroups = [
  { icons: ["coffee", "wall", "arch", "tools"], row: "h-[34px]", line: "border-[#b0b0b0]" },
  { icons: ["glasses"], row: "h-[35px]", line: "border-[#dcdcdc]" },
  { icons: ["bath", "people", "whisk", "bulb", "plant", "house", "medkit", "laptop"], row: "h-[34px]", line: "border-[#dcdcdc]" },
  { icons: ["brick", "tee"], row: "h-8", line: "border-[#dcdcdc]" },
  { icons: ["stairBlue", "stairOrange", "plug", "shelf", "stove"], row: "h-[34px]", line: "border-[#dcdcdc]" },
  { icons: ["vee"], row: "h-[34px]", line: "border-[#dcdcdc]" },
  { icons: ["cone"], row: "h-[34px]", line: "border-[#dcdcdc]" },
];

const withMenu = ["bath", "people", "whisk", "bulb", "plant", "house", "medkit", "laptop", "tee", "plug", "shelf", "stove", "cone"];

const AppStrip = () => (
  <div className="h-full w-[52px] shrink-0 overflow-hidden bg-[#f7f6f5]">
    {stripGroups.map(({ icons, row, line }) => (
      <div key={icons[0]} className={`border-b ${line}`}>
        {icons.map((name) => (
          <button
            type="button"
            key={name}
            aria-label={name}
            className={`relative flex w-full items-center justify-center ${row} ${name === "arch" ? "bg-[#c9deed]" : ""}`}
          >
            <Glyph size={24} className="overflow-visible">{glyphs[name]}</Glyph>
            {withMenu.includes(name) && <span className="absolute right-[3px] size-[3px] rounded-full bg-[#8a8a8a]" />}
          </button>
        ))}
      </div>
    ))}
  </div>
);

const ToolBar = ({ groups, label }) => (
  <div role="toolbar" aria-label={label} className="mt-1 ml-1 flex h-8 shrink-0 items-center self-start rounded border border-[#b0b0b0] bg-[#f7f6f5] pr-px">
    {groups.map((group, i) => (
      <React.Fragment key={i}>
        {i > 0 && <Rule className="mr-0.5 ml-[3px]" />}
        {group.map((name) => {
          if (name === "hand") {
            return (
              <button type="button" key={name} aria-label="Pan" className="flex w-[29px] justify-center">
                <Hand size={18} strokeWidth={1.5} fill="#fff" color={INK} />
              </button>
            );
          }
          if (name === "camera") {
            return (
              <button type="button" key={name} aria-label="Camera" className="flex w-[41px] items-center justify-center gap-0.5">
                <Sym name="camera" />
                <ChevronDown size={12} strokeWidth={1.8} />
              </button>
            );
          }
          return <IconButton key={name} name={name} className="w-[29px]" />;
        })}
      </React.Fragment>
    ))}
  </div>
);

const planTools = [
  ["hand"],
  ["search", "searchOff", "searchArea", "searchFit", "pip", "searchWindow"],
  ["target"],
  ["selectBox", "selectLasso", "selectList"],
  ["stretchA", "stretchB", "snapA", "snapB"],
  ["lineNodes", "lineDots", "dimThree", "dimension"],
  ["ruler", "sheets", "sheetFilm", "coinSelect", "cross"],
];

const sceneTools = [
  ["hand"],
  ["search", "searchOff", "searchFit"],
  ["globe", "boxExtents", "boxCamera"],
  ["selectBox", "selectList"],
  ["stretchB"],
  ["ruler", "sheets", "cross"],
  ["camera"],
  ["target"],
];

const PlanDrawing = () => (
  <svg className="min-h-0 w-full flex-1" shapeRendering="crispEdges">
    <rect x="126.5" y="84.5" width="314" height="148" fill="none" stroke="#8c8c8c" />
    <rect x="126.5" y="84.5" width="314" height="148" fill="none" stroke="#000" strokeDasharray="2 1" />
    <rect x="222.5" y="125.5" width="141" height="71" fill="#ccc" stroke="#000" />
    {Array.from({ length: 13 }, (_, i) => (
      <path key={i} d={`M${232.5 + Math.round(i * 10.1)} 125v72`} stroke="#000" />
    ))}
    <path d="M222 128.500h142M222 192.500h142" stroke="#000" />
    <path d="M222 161h142" stroke="#000" strokeWidth="2" />
    <text x="363" y="163" fontSize="8" fontWeight="700" fontFamily="Liberation Sans, sans-serif">UP</text>
  </svg>
);

const treads = Array.from({ length: 14 }, (_, i) => ({ x: 222 + i * 12.86, top: i * 7.77 }));

const stepPath = (base, count) =>
  treads.slice(0, count).map(({ x, top }) => `L${x} ${base - top}H${x + 12.86}`).join("");

const SceneDrawing = () => (
  <svg className="-mt-[21px] min-h-0 w-full flex-1">
    <defs>
      <filter id="carpet" x="0" y="0" width="100%" height="100%" colorInterpolationFilters="sRGB">
        <feTurbulence type="fractalNoise" baseFrequency="0.3 0.9" numOctaves="2" seed="4" />
        <feColorMatrix values="0.2 0 0 0 0.41  0.2 0 0 0 0.413  0.2 0 0 0 0.39  0 0 0 0 1" />
        <feComposite in2="SourceGraphic" operator="in" />
      </filter>
    </defs>
    <g transform="translate(0 -488)">
      <path d="M76 545h428l-17 20H157z" fill="#626262" />
      <path d="M402 543h23v2h-23z" fill="#94bfe8" />
      <path d="M402 551h23v9h-23z" fill="#4b6071" />
      <path d="M76 662l78-8h334l16 8z" fill="#858585" />
      <path d="M39 783l108-43h357l28 43z" fill="#82837d" filter="url(#carpet)" />
      <path d="M224 759l159-97h7v8l-150 93z" fill="#8c8c8c" />
      <path d="M235 659l25-4 145-88v-10l-3 2z" fill="#606060" />
      <path d="M222 651h13v2h-13zM239 643h8v2h-8z" fill="#606060" />
      <path d={`M222 659${stepPath(652, 14)}V559L235 659z`} fill="#e0e0e0" />
      <path d="M402 662h3l-3 4z" fill="#555" />
      <path d={`M222 767${stepPath(760, 13)}V662H402V665L236 767z`} fill="#e0e0e0" />
      <path d="M402 649h23v10h-23z" fill="#94c3ef" />
      <path d="M402 649h23v3h-23z" fill="#7aa5cb" />
      <path d="M402.500 652v-2l1-1h21v10" stroke="#5b88b0" fill="none" />
    </g>
  </svg>
);

const ViewTabs = () => (
  <div className="flex h-[22px] shrink-0 items-stretch border-t border-[#a9a9a9]">
    <button type="button" className="w-[65px] border-t-2 border-[#2f6c9c] bg-[#c9deed] pt-px">Normal</button>
    <div className="ml-[13px] flex gap-[23px] pt-[3px]">
      {["Architectural", "CAD", "TAGS", "Colored Tags", "All"].map((tab) => (
        <button type="button" key={tab}>{tab}</button>
      ))}
    </div>
    <button type="button" aria-label="More tabs" className="ml-7 flex items-center">
      <svg width="6" height="16" fill="#111">
        <circle cx="3" cy="3" r="1.8" />
        <circle cx="3" cy="8" r="1.8" />
        <circle cx="3" cy="13" r="1.8" />
      </svg>
    </button>
    <div className="ml-auto flex border-l border-[#a9a9a9]">
      <button type="button" className="w-[37px] pt-[3px]">2D</button>
      <button type="button" className="w-[38px] pt-[3px]">3D</button>
      <IconButton name="splitView" label="Split view" className="w-[38px] border-t-2 border-[#2f6c9c] bg-[#c9deed]" />
      <button type="button" className="w-[49px] pt-[3px]">Paper</button>
    </div>
  </div>
);

const LevelBar = ({ selected, onSelect }) => (
  <div className="relative grid h-[27px] shrink-0 grid-cols-4 pt-0.5">
    {["Outside", "Level 1", "Level 2", "Level 3"].map((name) => (
      <button
        type="button"
        key={name}
        onClick={() => onSelect(name)}
        className={`${name === "Level 1" ? "bg-[#f7f6f5]" : "bg-[#bfbce0]"} ${
          name === selected ? "border-3 border-black" : "border border-[#8b8b99]"
        }`}
      >
        {name}
      </button>
    ))}
    <span className="pointer-events-none absolute -top-px -right-[3px] -bottom-[5px] -left-1.5 border-3 border-[#0069b4]" />
    <Callout className="-bottom-[3px] -left-12">4</Callout>
  </div>
);

const App = () => {
  const [selected, setSelected] = useState("Level 2");

  return (
    <div className="flex h-screen min-h-[640px] w-full flex-col overflow-hidden bg-white pr-1 pb-[5px] pl-7 font-['Open_Sans',sans-serif] text-xs leading-4 text-black">
      <TitleBar />
      <MenuBar />
      <div className="flex min-h-0 flex-1">
        <div className="flex w-[366px] shrink-0 flex-col border-r border-[#a9a9a9]">
          <TabPicker />
          <div className="flex min-h-0 flex-1">
            <SidePanel selected={selected} onSelect={setSelected} />
            <AppStrip />
          </div>
        </div>
        <main className="flex min-w-0 flex-1 flex-col">
          <div className="flex min-h-0 flex-11 flex-col">
            <ToolBar groups={planTools} label="Plan tools" />
            <PlanDrawing />
          </div>
          <div className="flex min-h-0 flex-10 flex-col border-t border-[#a9a9a9]">
            <ToolBar groups={sceneTools} label="Scene tools" />
            <IconButton name="corner" label="Dock view" className="ml-[3px] size-[21px] bg-[#cfe8d2]" />
            <SceneDrawing />
          </div>
          <ViewTabs />
          <LevelBar selected={selected} onSelect={setSelected} />
        </main>
      </div>
    </div>
  );
};

export default App;
